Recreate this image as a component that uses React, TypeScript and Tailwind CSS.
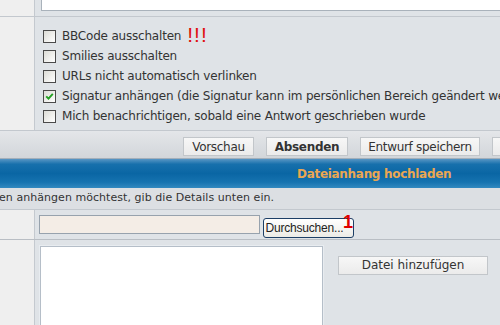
import React from "react";

const opts = [
  { label: "BBCode ausschalten", checked: false, mark: true },
  { label: "Smilies ausschalten", checked: false },
  { label: "URLs nicht automatisch verlinken", checked: false },
  {
    label:
      "Signatur anhängen (die Signatur kann im persönlichen Bereich geändert werden)",
    checked: true,
  },
  {
    label: "Mich benachrichtigen, sobald eine Antwort geschrieben wurde",
    checked: false,
  },
];

function CheckBox({ checked }: { checked?: boolean }) {
  return (
    <span className="w-[13px] h-[13px] shrink-0 border border-[#4a4a4a] bg-gradient-to-br from-[#dcdcd6] to-white flex items-center justify-center">
      {checked && (
        <svg width="9" height="9" viewBox="0 0 9 9">
          <path
            d="M1.2 4.3 L3.5 6.6 L7.8 1.8"
            fill="none"
            stroke="#22a022"
            strokeWidth="1.9"
          />
        </svg>
      )}
    </span>
  );
}

function Btn({
  children,
  bold,
  w,
}: {
  children: React.ReactNode;
  bold?: boolean;
  w: string;
}) {
  return (
    <button
      type="button"
      className={
        "h-[19px] shrink-0 border border-[#c2c6ca] bg-gradient-to-b from-[#f7f7f7] to-[#ebebeb] text-[12px] leading-none text-[#333] tracking-[-0.3px] " +
        w +
        (bold ? " font-bold" : "")
      }
    >
      {children}
    </button>
  );
}

function LeftCol() {
  return <div className="w-[35px] shrink-0 bg-[#efefef] border-r border-[#c4c9cf]" />;
}

export default function App() {
  return (
    <div className="w-[500px] h-[325px] overflow-hidden bg-[#dfe3e7] text-[#333] font-['DejaVu_Sans',Verdana,sans-serif]">
      {/* end of message box */}
      <div className="flex h-[17px] border-b border-[#c3c8ce]">
        <LeftCol />
        <div className="flex-1 pl-[6px]">
          <div className="h-[11px] bg-white border-l border-b border-[#a9b2bb]" />
        </div>
      </div>

      {/* options */}
      <div className="flex h-[114px] border-b border-[#c3c8ce]">
        <LeftCol />
        <div className="flex-1 pt-[9px] pl-[8px] overflow-hidden">
          {opts.map((o) => (
            <div key={o.label} className="h-[20px] flex items-center gap-[6px] whitespace-nowrap">
              <CheckBox checked={o.checked} />
              <span className="text-[12px] tracking-[-0.2px]">{o.label}</span>
              {o.mark && (
                <span className="text-[#e01010] text-[21px] leading-none -mt-[3px] tracking-[1px] font-['Liberation_Sans',Arial,sans-serif]">
                  !!!
                </span>
              )}
            </div>
          ))}
        </div>
      </div>

      {/* submit buttons */}
      <div className="h-[28px] bg-gradient-to-b from-[#e4e6e9] to-[#d2d6da] border-b border-[#a3afba] flex gap-[12px] pl-[183px] pt-[6px] whitespace-nowrap">
        <Btn w="w-[71px]">Vorschau</Btn>
        <Btn w="w-[82px]" bold>
          Absenden
        </Btn>
        <Btn w="w-[120px]">Entwurf speichern</Btn>
        <Btn w="w-[90px] text-left pl-[14px]">Abbrechen</Btn>
      </div>

      {/* attachment header */}
      <div className="h-[29px] bg-[linear-gradient(to_bottom,#5896c4_0%,#1770ac_18%,#0a66a4_50%,#1673b0_80%,#3289c0_100%)] flex items-center pl-[297px]">
        <span className="text-[12px] font-bold text-[#eba752] tracking-[-0.3px] whitespace-nowrap">
          Dateianhang hochladen
        </span>
      </div>

      <div className="h-[22px] bg-[#dcdfe3] border-b border-[#c3c8ce] flex items-center whitespace-nowrap overflow-hidden">
        <span className="text-[11px] tracking-[0.05px] -ml-[1px]">
          en anhängen möchtest, gib die Details unten ein.
        </span>
      </div>

      {/* file select */}
      <div className="flex h-[30px] border-b border-[#b9bec4]">
        <LeftCol />
        <div className="flex-1 flex items-start pt-[5px] pl-[4px] gap-[3px]">
          <div className="w-[221px] h-[19px] bg-[#f4ede6] border border-[#97a2ad]" />
          <div className="relative">
            <button
              type="button"
              className="w-[91px] h-[20px] rounded-[3px] border border-[#1d3f66] bg-gradient-to-b from-white to-[#ecebe6] text-[12px] leading-none text-[#222] font-['Liberation_Sans',Arial,sans-serif] pr-[8px] tracking-[-0.2px]"
            >
              Durchsuchen...
            </button>
            <span className="absolute left-[80px] -top-[2px] text-[#e00000] font-bold text-[18px] leading-none font-['Liberation_Sans',Arial,sans-serif]">
              1
            </span>
          </div>
        </div>
      </div>

      {/* attachment list */}
      <div className="flex h-[100px]">
        <LeftCol />
        <div className="flex-1 flex items-start pt-[6px] pl-[5px] gap-[15px]">
          <div className="w-[283px] h-[90px] bg-white border border-[#b5bec8] shadow-[0_0_0_1px_#e8ecf0]" />
          <div className="pt-[6px]">
            <button
              type="button"
              className="w-[150px] h-[19px] border border-[#c2c6ca] bg-gradient-to-b from-[#f7f7f7] to-[#ebebeb] text-[12px] leading-none text-[#333]"
            >
              Datei hinzufügen
            </button>
          </div>
        </div>
      </div>
    </div>
  );
}
